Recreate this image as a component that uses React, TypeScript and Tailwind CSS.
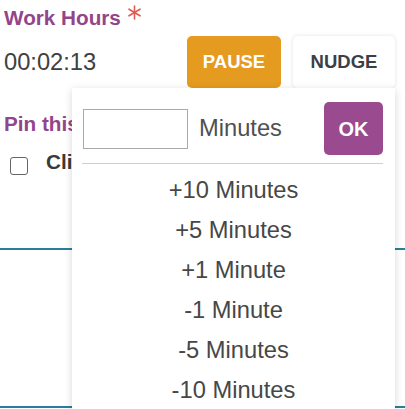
import React from "react";

const items = ["+10 Minutes", "+5 Minutes", "+1 Minute", "-1 Minute", "-5 Minutes", "-10 Minutes"];

export default function App() {
  return (
    <div className="relative w-[405px] h-[409px] overflow-hidden bg-white font-['Liberation_Sans',Arial,sans-serif]">
      <div className="pl-1 pr-[10px] pt-[6px]">
        <div className="flex items-start h-6">
          <span className="text-[20.7px] leading-6 font-bold text-[#93458b]">Work Hours</span>
          <svg className="ml-[7px] -mt-[1px]" width="13" height="15" viewBox="0 0 13 15">
            <g stroke="#e15a52" strokeWidth="1.6" strokeLinecap="round">
              <line x1="6.5" y1="1" x2="6.5" y2="14" />
              <line x1="1" y1="4.2" x2="12" y2="10.8" />
              <line x1="1" y1="10.8" x2="12" y2="4.2" />
            </g>
          </svg>
        </div>
        <div className="mt-[6px] flex items-center h-[52px]">
          <span className="text-[23.7px] leading-7 text-[#404040]">00:02:13</span>
          <div className="ml-auto flex gap-3">
            <button className="w-[94px] h-[52px] rounded-[5px] bg-[#e59b1f] text-white font-bold text-[18.5px]">PAUSE</button>
            <button className="w-[102px] h-[52px] rounded-[5px] bg-white shadow-[0_0_4px_rgba(0,0,0,0.12)] text-[#3b4047] font-bold text-[18.5px]">NUDGE</button>
          </div>
        </div>
        <div className="mt-[23.5px] h-6 text-[20.7px] leading-6 font-bold text-[#93458b] whitespace-nowrap">Pin this timer</div>
        <div className="mt-[14.5px] flex items-start h-[25px]">
          <div className="ml-[6px] mt-[7px] w-[18px] h-[18px] rounded-[3px] border border-[#666]" />
          <span className="ml-[18px] text-[20.7px] leading-6 font-bold text-[#3a3a3a] whitespace-nowrap">Click here to pin</span>
        </div>
      </div>
      <div className="mt-[73px] h-[1.5px] bg-[#2a7d9b]" />
      <div className="mt-[156.5px] h-[1.5px] bg-[#2a7d9b]" />

      <div className="absolute left-[72px] top-[88px] w-[323px] h-[340px] bg-white shadow-[0_2px_8px_rgba(0,0,0,0.16)]">
        <div className="pt-[14px] pl-[11px] pr-[12px] flex items-center">
          <div className="w-[105px] h-[40px] border border-[#aaa] bg-white" />
          <span className="ml-[11px] text-[23.7px] text-[#505050]">Minutes</span>
          <button className="ml-auto w-[59px] h-[53px] rounded-[5px] bg-[#9a4a8f] text-white font-bold text-[20px]">OK</button>
        </div>
        <div className="mt-[8px] ml-[10px] mr-[12px] h-px bg-[#cfcfcf]" />
        <div className="mt-[7px] flex flex-col">
          {items.map((t) => (
            <div key={t} className="h-10 flex items-center justify-center text-[23.7px] text-[#474747]">
              {t}
            </div>
          ))}
        </div>
      </div>
    </div>
  );
}
